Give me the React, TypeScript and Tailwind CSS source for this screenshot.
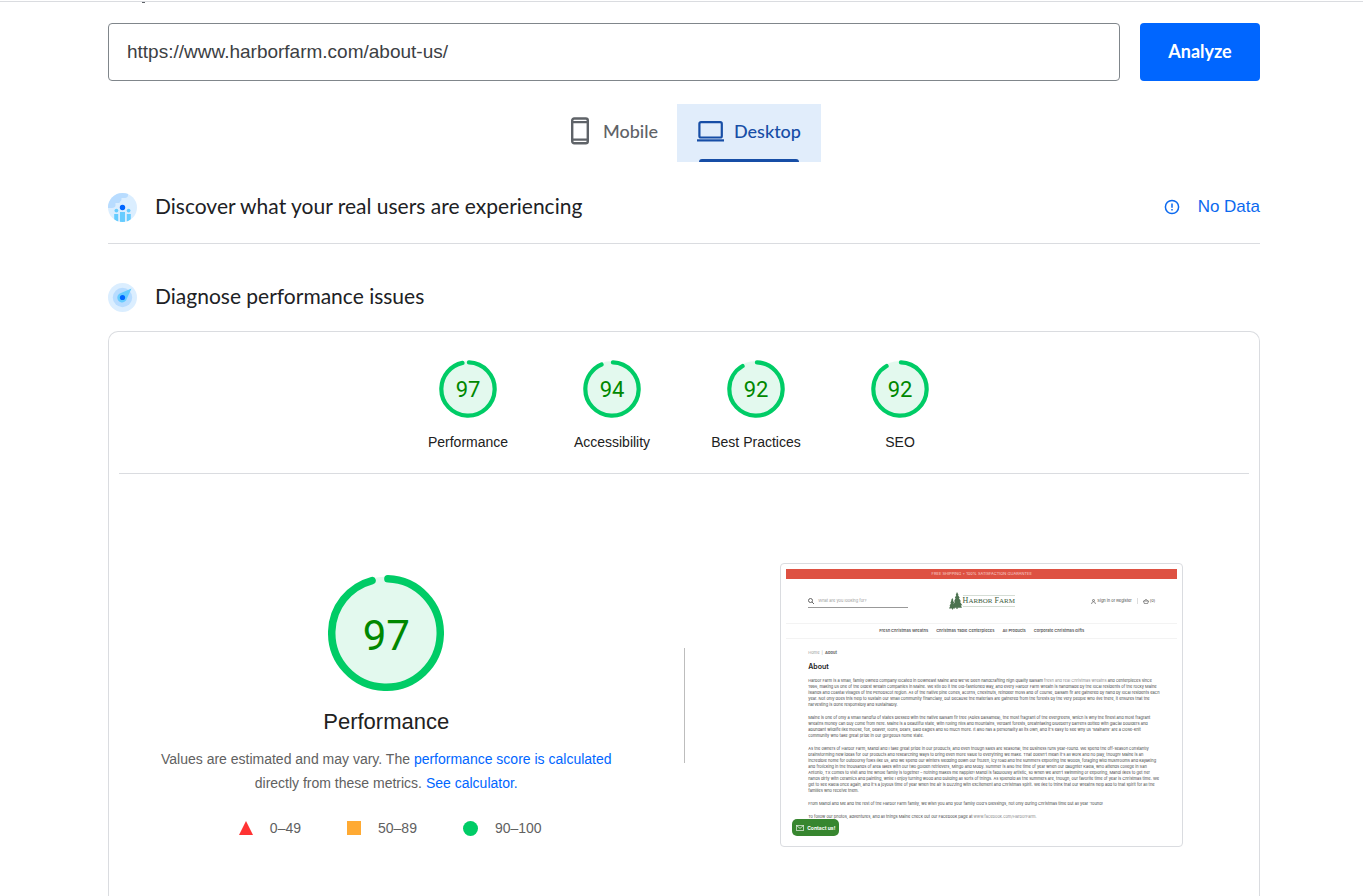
import type { ReactNode } from "react";

interface Score {
  label: string;
  value: number;
}

const SCORES: Score[] = [
  { label: "Performance", value: 97 },
  { label: "Accessibility", value: 94 },
  { label: "Best Practices", value: 92 },
  { label: "SEO", value: 92 },
];

const SITE_NAV = ["Fresh Christmas Wreaths", "Christmas Table Centerpieces", "All Products", "Corporate Christmas Gifts"];

const ABOUT_TEXT: string[][] = [
  [
    "1996, making us one of the oldest wreath companies in Maine. We still do it the old-fashioned way, and every Harbor Farm wreath is handmade by the local residents of the rocky Maine",
    "islands and coastal villages of the Penobscot region. All of the native pine cones, acorns, chestnuts, reindeer moss and of course, balsam fir are gathered by hand by local residents each",
    "year. Not only does this help to sustain our small community financially, but because the materials are gathered from the forests by the very people who live there, it ensures that the",
    "harvesting is done responsibly and sustainably.",
  ],
  [
    "Maine is one of only a small handful of states blessed with the native Balsam fir tree (Abies balsamea), the most fragrant of the evergreens, which is why the finest and most fragrant",
    "wreaths money can buy come from here. Maine is a beautiful state, with rolling hills and mountains, verdant forests, breathtaking blueberry barrens dotted with glacial boulders and",
    "abundant wildlife like moose, fox, beaver, loons, bears, bald eagles and so much more. It also has a personality all its own, and it's easy to see why us 'Mainahs' are a close-knit",
    "community who take great pride in our gorgeous home state.",
  ],
  [
    "As the owners of Harbor Farm, Mandi and I take great pride in our products, and even though sales are seasonal, the business runs year-round. We spend the off-season constantly",
    "brainstorming new ideas for our products and researching ways to bring even more value to everything we make. That doesn't mean it's all work and no play, though! Maine is an",
    "incredible home for outdoorsy folks like us, and we spend our winters sledding down our frozen, icy road and the summers exploring the woods, foraging wild mushrooms and kayaking",
    "and frolicking in the thousands of area lakes with our two golden retrievers, Mingo and Moby. Summer is also the time of year when our daughter Kaela, who attends college in San",
    "Antonio, TX comes to visit and the whole family is together – nothing makes me happier! Mandi is fabulously artistic, so when we aren't swimming or exploring, Mandi likes to get her",
    "hands dirty with ceramics and painting, while I enjoy turning wood and building all sorts of things. As splendid as the summers are, though, our favorite time of year is Christmas time. We",
    "get to see Kaela once again, and it's a joyous time of year when the air is buzzing with excitement and Christmas spirit. We like to think that our wreaths help add to that spirit for all the",
    "families who receive them.",
  ],
  ["From Mandi and Me and the rest of the Harbor Farm family, we wish you and your family God's blessings, not only during Christmas time but all year 'round!"],
];

function Gauge({ value, large = false }: { value: number; large?: boolean }) {
  const r = 56;
  const c = 2 * Math.PI * r;
  // round caps eat into the gap, so the arc is drawn a little short
  const arc = (value / 100) * c - (large ? 6 : 5);
  return (
    <div className={large ? "relative size-[116px]" : "relative size-[58px]"}>
      <svg viewBox="0 0 124 124" className="size-full">
        <circle cx="62" cy="62" r="60" fill="#00cc66" fillOpacity="0.11" />
        <circle
          cx="62"
          cy="62"
          r={large ? 58 : r + 1}
          fill="none"
          stroke="#00cc66"
          strokeWidth={large ? 8 : 9}
          strokeLinecap="round"
          pathLength={c}
          strokeDasharray={`${arc} ${c}`}
          transform="rotate(-88 62 62)"
        />
      </svg>
      <span
        className={
          large
            ? "absolute inset-0 flex items-center justify-center pt-1 font-['Roboto',sans-serif] text-[42px] text-[#008800]"
            : "absolute inset-0 flex items-center justify-center pt-px font-['Roboto',sans-serif] text-[22px] text-[#008800]"
        }
      >
        {value}
      </span>
    </div>
  );
}

function PhoneIcon() {
  return (
    <svg width="18" height="28" viewBox="0 0 18 28" fill="none" stroke="currentColor">
      <rect x="1.2" y="1.5" width="15.6" height="24.8" rx="2" strokeWidth="2.4" />
      <path d="M1 5.2h16M1 22.6h16" strokeWidth="2.2" />
    </svg>
  );
}

function LaptopIcon() {
  return (
    <svg width="27" height="22" viewBox="0 0 27 22" fill="none" stroke="currentColor" strokeWidth="2.2">
      <rect x="2.4" y="2.1" width="22.4" height="15.4" rx="1.6" />
      <path d="M0 20.4h27" />
    </svg>
  );
}

function UsersIcon() {
  return (
    <svg width="29" height="29" viewBox="0 0 29 29" className="shrink-0">
      <clipPath id="globe">
        <circle cx="14.5" cy="14.5" r="14.5" />
      </clipPath>
      <g clipPath="url(#globe)">
        <path fill="#dbeeff" d="M0 0h29v29H0z" />
        <path fill="#b8dcff" d="M0 0h20v2.500c0 1.500-1.500 2.500-3 2.500h-3.500v1.500c0 2-2 1.500-2 3.500H7.500v2.500c0 1.500-1.500 2.500-3.500 2.500H0z" />
        <g fill="#66ccff">
          <path d="M12 19h5v10h-5zM6.200 21h4v8h-4zM18.800 21h4v8h-4z" />
          <circle cx="8.400" cy="17.600" r="1.900" />
          <circle cx="20.600" cy="17.600" r="1.900" />
        </g>
        <circle cx="14.500" cy="14.500" r="2.700" fill="#0066ff" />
      </g>
    </svg>
  );
}

function CompassIcon() {
  return (
    <svg width="29" height="29" viewBox="0 0 29 29" className="shrink-0">
      <circle cx="14.500" cy="14.500" r="14.500" fill="#dbeeff" />
      <circle cx="14.500" cy="14.500" r="9.700" fill="#b8dcff" />
      <path fill="#66ccff" d="M23.500 5.500 18.700 16a4.800 4.800 0 1 1-5.800-6z" />
      <circle cx="14.500" cy="14.500" r="2.600" fill="#0066ff" />
    </svg>
  );
}

function TreeLogo() {
  return (
    <svg width="14" height="18" viewBox="0 0 14 18" fill="#4c7350">
      <path d="M8 0l1.600 3-.8-.2 2 3.200-1-.1 2.300 3.600-1.300-.1 2.600 4-1.600-.1 1.200 2.400H8.600V17H7.400v-1.300H4l1-2.400-1 .1 2-3.900-1 .1 1.600-3.600-.8.1 1.500-3.200-.6.100z" />
      <path d="M3.400 6l1 2.300-.5-.1 1.300 2.800-.7-.1 1.500 3-.9-.1 1 2.600H4v1H3v-1H0l1.300-2.600-.8.100 1.500-3-.7.100 1.200-2.800-.5.100z" />
    </svg>
  );
}

function SectionHeading({ icon, children }: { icon: ReactNode; children: ReactNode }) {
  return (
    <div className="flex items-center gap-[18px]">
      {icon}
      <h2 className="pb-1 font-['Google_Sans','Lato',sans-serif] text-[21px] leading-6 text-[#202124]">{children}</h2>
    </div>
  );
}

function PageThumbnail() {
  return (
    <div className="relative w-[403px] shrink-0 rounded border border-[#dadce0] bg-white p-[5px] pb-[26px] font-['Inter',sans-serif] text-[4px] leading-[6px] text-[#444]">
      <div className="h-[10px] bg-[#de5142] text-center text-[4px] leading-[10px] text-[#f8d4cf]">
        FREE SHIPPING + 100% SATISFACTION GUARANTEE
      </div>

      <div className="flex h-[44px] items-center justify-between px-[22px]">
        <div className="flex h-[14px] w-[100px] items-center gap-1 border-b border-[#999] text-[#999]">
          <svg width="6" height="6" viewBox="0 0 6 6" fill="none" stroke="#444" strokeWidth="0.8">
            <circle cx="2.500" cy="2.500" r="2" />
            <path d="M4 4l2 2" />
          </svg>
          What are you looking for?
        </div>
        <div className="flex items-center">
          <TreeLogo />
          <span className="border-y border-[#d5ddd5] font-['Liberation_Serif',serif] text-[8px] leading-[10px] text-[#3c5a40]">
            H<span className="text-[7px]">ARBOR</span> F<span className="text-[7px]">ARM</span>
          </span>
        </div>
        <div className="flex w-[100px] items-center justify-end gap-px">
          <svg width="5" height="5" viewBox="0 0 5 5" fill="none" stroke="#444" strokeWidth="0.6">
            <circle cx="2.500" cy="1.400" r="1" />
            <path d="M.6 5c0-3 3.800-3 3.800 0" />
          </svg>
          <span className="whitespace-nowrap">Sign in or Register</span>
          <span className="mx-1 h-[6px] w-px bg-[#ddd]" />
          <svg width="6" height="5" viewBox="0 0 6 5" fill="none" stroke="#444" strokeWidth="0.6">
            <path d="M.4 2h5.200l-1 2.600H1.400zM1.600 2C1.800 0 4.200 0 4.400 2" />
          </svg>
          (0)
        </div>
      </div>

      <div className="flex h-4 items-center justify-center gap-2 border-y border-[#f3f3f3] font-semibold text-[#555]">
        {SITE_NAV.map((item) => (
          <span key={item}>{item}</span>
        ))}
      </div>

      <div className="px-[22px] pt-[11px]">
        <p className="text-[#999]">
          Home <span className="mx-px">|</span> <b className="text-[#666]">About</b>
        </p>
        <p className="mt-[6px] mb-[6px] text-[7px] leading-[10px] font-semibold text-[#222]">About</p>
        {ABOUT_TEXT.map((lines, i) => (
          <p key={i} className="mb-[7px] whitespace-nowrap">
            {i === 0 && (
              <span className="block">
                Harbor Farm is a small, family owned company located in Downeast Maine and we've been handcrafting high
                quality Balsam <span className="text-[#888]">fresh and real Christmas wreaths</span> and centerpieces since
              </span>
            )}
            {lines.map((line) => (
              <span key={line} className="block">
                {line}
              </span>
            ))}
          </p>
        ))}
        <p>
          To follow our photos, adventures, and all things Maine check out our Facebook page at{" "}
          <span className="text-[#888]">www.facebook.com/HarborFarm.</span>
        </p>
      </div>

      <div className="absolute bottom-[10px] left-[11px] flex h-[17px] w-[47px] items-center justify-center gap-[3px] rounded-[5px] bg-[#37862f] text-[5px] font-bold text-white">
        <svg width="8" height="6" viewBox="0 0 8 6" fill="none" stroke="white" strokeWidth="0.7">
          <path d="M.4.4h7.200v5.200H.4zM.4.4 4 3.400 7.600.4" />
        </svg>
        Contact us!
      </div>
    </div>
  );
}

export default function App() {
  return (
    <div className="flex min-h-screen flex-col bg-white pt-px font-['Liberation_Sans',Arial,sans-serif] text-[#202124]">
      <div className="h-px bg-[#dadce0]" />

      <main className="flex flex-1 flex-col pr-[103px] pl-[108px]">
        <div className="ml-[34px] h-px w-[3px] bg-[#5f6368]" />

        {/* URL form */}
        <form className="mt-5 flex gap-5" onSubmit={(e) => e.preventDefault()}>
          <input
            type="text"
            aria-label="Web page URL"
            defaultValue="https://www.harborfarm.com/about-us/"
            className="h-[58px] min-w-0 flex-1 rounded border border-[#80868b] px-[18px] text-[19px] text-[#3c4043] outline-none"
          />
          <button
            type="submit"
            className="h-[58px] w-[120px] rounded bg-[#0066ff] pb-[2px] font-['Google_Sans','Lato',sans-serif] text-[18px] font-bold text-white"
          >
            Analyze
          </button>
        </form>

        {/* Device tabs */}
        <div role="tablist" className="mt-[23px] flex justify-center font-['Google_Sans','Lato',sans-serif] text-[18px] font-medium">
          <button
            type="button"
            role="tab"
            aria-selected="false"
            className="flex h-[58px] w-[130px] items-center justify-end gap-[14px] pr-[19px] pb-1 text-[#5f6368]"
          >
            <PhoneIcon />
            Mobile
          </button>
          <button
            type="button"
            role="tab"
            aria-selected="true"
            className="relative flex h-[58px] w-[144px] items-center justify-center gap-[10px] bg-[#e1edfb] pb-1 text-[#174ea6]"
          >
            <LaptopIcon />
            Desktop
            <span className="absolute inset-x-[22px] bottom-0 h-[3px] rounded-t-[3px] bg-[#174ea6]" />
          </button>
        </div>

        {/* Field data */}
        <section className="mt-[31px] flex items-center justify-between border-b border-[#dadce0] pb-[21px]">
          <SectionHeading icon={<UsersIcon />}>Discover what your real users are experiencing</SectionHeading>
          <div className="flex items-center gap-[18px] pb-[2px] text-[17px] leading-6 text-[#0b69ef]">
            <svg width="16" height="16" viewBox="0 0 16 16" fill="none" stroke="currentColor" strokeWidth="1.500">
              <circle cx="8" cy="8" r="6.600" />
              <path d="M8 4.400v4.300M8 10v1.600" />
            </svg>
            No Data
          </div>
        </section>

        {/* Lab data */}
        <section className="mt-[39px] flex flex-1 flex-col">
          <SectionHeading icon={<CompassIcon />}>Diagnose performance issues</SectionHeading>

          <div className="mt-[19px] flex-1 rounded-t-[10px] border border-b-0 border-[#dadce0] px-[10px] pt-[28px]">
            <div className="flex justify-center border-b border-[#dadce0] pb-[21px]">
              {SCORES.map((score) => (
                <a key={score.label} href="#performance" className="flex w-36 flex-col items-center gap-[14px]">
                  <Gauge value={score.value} />
                  <span className="text-[14px] leading-5 text-[#212121]">{score.label}</span>
                </a>
              ))}
            </div>

            <div id="performance" className="flex items-center pt-[89px] pb-12">
              <div className="flex flex-1 flex-col items-center self-start pt-3">
                <Gauge value={97} large />
                <h3 className="mt-[15px] text-[22px] leading-8 text-[#212121]">Performance</h3>
                <p className="mt-[9px] max-w-[480px] text-center text-[14px] leading-6 text-[#616161]">
                  Values are estimated and may vary. The{" "}
                  <a href="#scoring" className="text-[#0066ff]">
                    performance score is calculated
                  </a>{" "}
                  directly from these metrics.{" "}
                  <a href="#calculator" className="text-[#0066ff]">
                    See calculator.
                  </a>
                </p>
                <div className="mt-[21px] flex items-center gap-[46px] pl-2 text-[14px] leading-6 text-[#616161]">
                  <span className="flex items-center gap-[17px]">
                    <svg width="14" height="14" viewBox="0 0 14 14" fill="#ff3333">
                      <path d="M7 0l7 14H0z" />
                    </svg>
                    0–49
                  </span>
                  <span className="flex items-center gap-[17px]">
                    <span className="size-[14px] bg-[#ffaa33]" />
                    50–89
                  </span>
                  <span className="flex items-center gap-[17px]">
                    <span className="size-[15px] rounded-full bg-[#00cc66]" />
                    90–100
                  </span>
                </div>
              </div>
              <div className="mx-[30px] h-[115px] w-px bg-[#bdbdbd]" />
              <div className="flex flex-1 justify-center">
                <PageThumbnail />
              </div>
            </div>
          </div>
        </section>
      </main>
    </div>
  );
}
